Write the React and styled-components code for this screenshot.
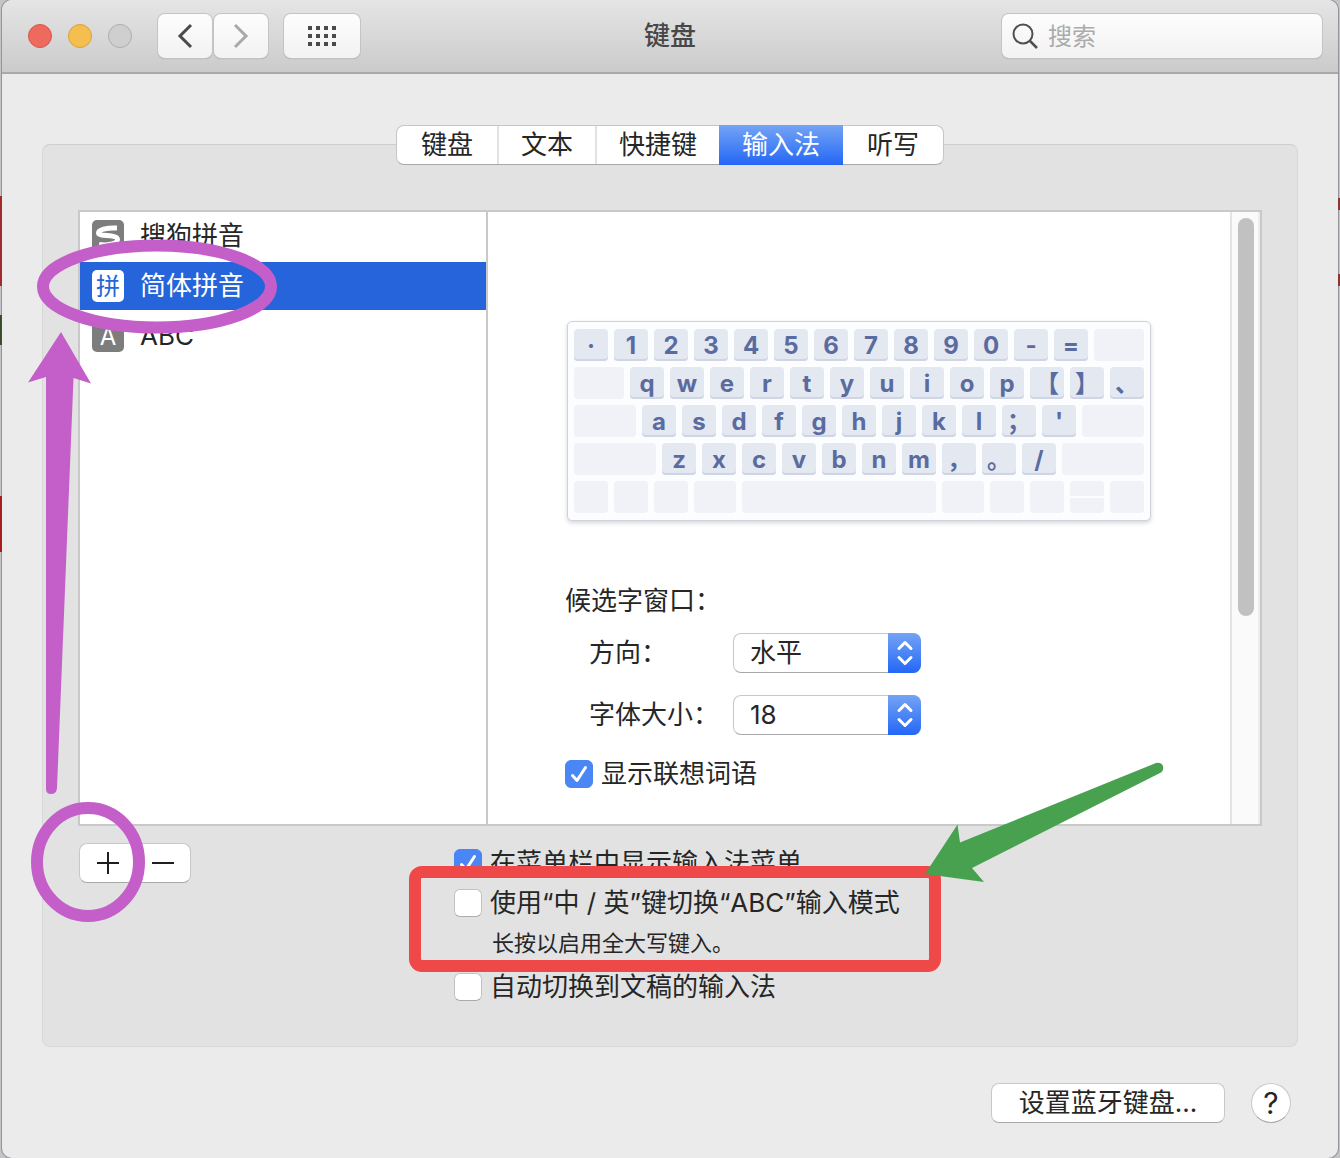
import React, { useState } from "react";
import styled, { createGlobalStyle } from "styled-components";

const GlobalStyle = createGlobalStyle`
  * {
    box-sizing: border-box;
  }
  body {
    margin: 0;
    font-family: Inter, "Noto Sans CJK SC", sans-serif;
    font-size: 26px;
    line-height: 36px;
    color: #262626;
    background-color: #c4c4c6;
    /* the desktop that shows at both sides of the window */
    background-image: linear-gradient(
        transparent 196px,
        #a32a2a 196px,
        #a32a2a 286px,
        transparent 286px,
        transparent 315px,
        #3c4a2c 315px,
        #3c4a2c 345px,
        transparent 345px,
        transparent 496px,
        #a31c1c 496px,
        #a31c1c 552px,
        transparent 552px
      ),
      linear-gradient(
        transparent 198px,
        #a32a2a 198px,
        #a32a2a 210px,
        transparent 210px,
        transparent 274px,
        #a32a2a 274px,
        #a32a2a 286px,
        transparent 286px
      );
    background-size: 2px 100%, 2px 100%;
    background-position: left top, right top;
    background-repeat: no-repeat;
  }
  button, input, select {
    font: inherit;
    color: inherit;
    margin: 0;
  }
`;
const Window = styled.main`
  min-height: 100vh;
  margin: 0 2px;
  display: flex;
  flex-direction: column;
  background-color: #ebebeb;
  border-radius: 10px;
  box-shadow: 0 0 0 1px rgba(80, 80, 84, 0.4);
  overflow: hidden;
`;
const TitleBar = styled.header`
  display: grid;
  grid-template-columns: 1fr auto 1fr;
  align-items: center;
  height: 74px;
  padding: 0 16px;
  background: linear-gradient(#e5e5e5, #cbcbcb);
  border-bottom: 2px solid #a9a9a9;
  h1 {
    margin: 0;
    font-size: 26px;
    font-weight: 500;
    color: #474747;
  }
`;
const Controls = styled.div`
  display: flex;
  align-items: center;
  padding-left: 10px;
`;
const TrafficLight = styled.button`
  width: 24px;
  height: 24px;
  padding: 0;
  margin-right: 16px;
  border-radius: 50%;
  border: 1px solid ${(props) => props.$edge};
  background-color: ${(props) => props.$fill};
`;
const ToolButton = styled.button`
  display: grid;
  place-items: center;
  width: ${(props) => (props.$wide ? "76px" : "54px")};
  height: 44px;
  padding: 0;
  margin-left: ${(props) => props.$gap || "0"};
  border: 0;
  border-radius: 7px;
  color: ${(props) => (props.disabled ? "#a9a9a9" : "#4a4a4a")};
  background: linear-gradient(#fdfdfd, #f2f2f2);
  box-shadow: 0 0 0 1px #c4c4c4, 0 1px 1px 0 #8c8c8c;
`;
const SearchField = styled.label`
  justify-self: end;
  display: flex;
  align-items: center;
  gap: 10px;
  width: 320px;
  height: 44px;
  padding: 0 10px;
  border-radius: 7px;
  background: linear-gradient(#fdfdfd, #f2f2f2);
  box-shadow: 0 0 0 1px #c4c4c4, 0 1px 1px 0 #8c8c8c;
  svg {
    flex: none;
  }
  input {
    flex: 1;
    min-width: 0;
    height: 40px;
    padding: 0;
    font-size: 24px;
    border: 0;
    outline: 0;
    background: transparent;
  }
  input::placeholder {
    color: #ababab;
    opacity: 1;
  }
`;
const Body = styled.div`
  flex: 1;
  display: flex;
  flex-direction: column;
  padding: 51px 40px 34px;
`;
const Tabs = styled.nav`
  position: relative;
  align-self: center;
  display: grid;
  grid-template-columns: 102px 98px 122px 124px 100px;
  height: 40px;
  margin-bottom: -21px;
  border-radius: 8px;
  background-color: #fff;
  border: 1px solid #c6c6c6;
  border-bottom-color: #a8a8a8;
`;
const Tab = styled.button`
  margin: ${(props) => (props.$active ? "-1px 0" : "0")};
  padding: 0;
  border: 0;
  border-right: ${(props) => (props.$divider ? "2px solid #e2e2e2" : "0")};
  color: ${(props) => (props.$active ? "#fff" : "#262626")};
  background: ${(props) =>
    props.$active ? "linear-gradient(#74a4f5, #2467f6)" : "transparent"};
`;
const Panel = styled.section`
  padding: 65px 35px 39px;
  background-color: #e2e2e2;
  border: 1px solid #d8d8d8;
  border-top-color: #cecece;
  border-radius: 8px;
`;
const Sources = styled.div`
  display: flex;
  height: 616px;
  background-color: #fff;
  border: 2px solid #c9c9c9;
`;
const SourceList = styled.ul`
  position: relative;
  flex: 0 0 408px;
  display: flex;
  flex-direction: column;
  gap: 2px;
  margin: 0;
  padding: 0;
  list-style: none;
  border-right: 2px solid #c9c9c9;
`;
const SourceItem = styled.button`
  display: flex;
  align-items: center;
  gap: 16px;
  width: 100%;
  height: 48px;
  padding: 0 12px;
  border: 0;
  text-align: left;
  color: ${(props) => (props.$active ? "#fff" : "#262626")};
  background-color: ${(props) => (props.$active ? "#2564da" : "transparent")};
`;
const SourceIcon = styled.span`
  display: grid;
  place-items: center;
  width: 32px;
  height: 32px;
  border-radius: 5px;
  font-size: 24px;
  line-height: 34px;
  color: ${(props) => (props.$active ? "#2564da" : "#fff")};
  background-color: ${(props) => (props.$active ? "#fff" : "#7d7d7d")};
`;
const Preview = styled.div`
  flex: 1;
  display: flex;
  justify-content: center;
  padding-top: 109px;
`;
const PreviewColumn = styled.div`
  width: 588px;
`;
const Keyboard = styled.div`
  display: flex;
  flex-direction: column;
  gap: 6px;
  margin: 0 2px 62px;
  padding: 7px 6px;
  border: 1px solid #cfd2dc;
  border-radius: 5px;
  background-color: #fcfdff;
  box-shadow: 0 2px 4px rgba(0, 0, 0, 0.16);
`;
const KeyRow = styled.div`
  display: flex;
  gap: 6px;
`;
const Key = styled.span`
  flex: 0 0 34px;
  height: 32px;
  border-radius: 4px;
  font-size: 24px;
  font-weight: 700;
  line-height: 34px;
  text-align: center;
  color: #5a6c9f;
  background-color: #e4e8f1;
  box-shadow: inset 0 -2px 0 #cfd5e4;
`;
const BlankKey = styled.span`
  flex: ${(props) => (props.$width ? `0 0 ${props.$width}px` : "1")};
  height: 32px;
  border-radius: 4px;
  background: ${(props) =>
    props.$split
      ? "linear-gradient(#f1f2f7 15px, #fcfdff 15px, #fcfdff 17px, #f1f2f7 17px)"
      : "#f1f2f7"};
`;
const FormHeading = styled.h2`
  margin: 0 0 14px;
  font-size: 26px;
  font-weight: 400;
`;
const FormRows = styled.div`
  display: flex;
  flex-direction: column;
  gap: 22px;
  margin-bottom: 19px;
`;
const FormRow = styled.label`
  display: grid;
  grid-template-columns: 144px 188px;
  align-items: center;
  padding-left: 24px;
`;
const SelectBox = styled.span`
  display: grid;
  align-items: center;
  height: 40px;
  > * {
    grid-area: 1 / 1;
  }
  select {
    width: 100%;
    height: 40px;
    padding: 0 40px 0 16px;
    appearance: none;
    border: 1px solid #c8c8c8;
    border-bottom-color: #a8a8a8;
    border-radius: 8px;
    background-color: #fff;
  }
`;
const SelectCap = styled.span`
  justify-self: end;
  display: grid;
  place-items: center;
  width: 33px;
  height: 40px;
  border-radius: 0 8px 8px 0;
  background: linear-gradient(#74a4f5, #2467f6);
  pointer-events: none;
`;
const CheckRow = styled.label`
  display: flex;
  align-items: center;
  gap: 8px;
  height: 40px;
  white-space: nowrap;
`;
const CheckBox = styled.span`
  display: grid;
  > * {
    grid-area: 1 / 1;
  }
  input {
    width: 28px;
    height: 28px;
    appearance: none;
    border: 1px solid #c2c2c2;
    border-bottom-color: #acacac;
    border-radius: 6px;
    background-color: #fff;
  }
  input:checked {
    border-color: #4a86f0;
    background-color: #4a86f5;
  }
  svg {
    pointer-events: none;
  }
`;
const Scrollbar = styled.div`
  flex: 0 0 30px;
  padding: 6px 4px 0 6px;
  background-color: #fafafa;
  border-left: 2px solid #e4e4e4;
  border-right: 2px solid #ededed;
`;
const ScrollThumb = styled.div`
  width: 16px;
  height: 398px;
  border-radius: 8px;
  background-color: #c1c1c1;
`;
const PanelFooter = styled.div`
  display: grid;
  grid-template-columns: 376px 1fr;
  align-items: start;
  padding-top: 17px;
`;
const AddRemove = styled.div`
  position: relative;
  justify-self: start;
  display: flex;
  margin-left: 1px;
  border: 1px solid #c8c8c8;
  border-bottom-color: #a8a8a8;
  border-radius: 8px;
  background-color: #fff;
  button {
    display: grid;
    place-items: center;
    width: 55px;
    height: 38px;
    padding: 0;
    border: 0;
    background: transparent;
  }
`;
const Marked = styled.div`
  position: relative;
  width: 442px;
  margin-bottom: 4px;
`;
const Hint = styled.p`
  margin: 0;
  padding-left: 38px;
  font-size: 22px;
  line-height: 40px;
`;
const Mark = styled.svg`
  position: absolute;
  left: ${(props) => props.$left}px;
  top: ${(props) => props.$top}px;
  z-index: 2;
  pointer-events: none;
`;
const BottomBar = styled.footer`
  display: flex;
  justify-content: flex-end;
  gap: 26px;
  padding: 36px 7px 0 0;
`;
const PushButton = styled.button`
  height: 40px;
  width: ${(props) => (props.$round ? "40px" : "234px")};
  padding: 0;
  border: 1px solid #c8c8c8;
  border-bottom-color: #a8a8a8;
  border-radius: ${(props) => (props.$round ? "50%" : "8px")};
  background-color: #fff;
  font-size: ${(props) => (props.$round ? "30px" : "26px")};
`;

const PURPLE = "#c45ec9";
const RED = "#ee4848";
const GREEN = "#48a14f";

const tabs = ["键盘", "文本", "快捷键", "输入法", "听写"];

const Check = ({ label, checked }) => {
  const [on, setOn] = useState(Boolean(checked));
  return (
    <CheckRow>
      <CheckBox>
        <input
          type="checkbox"
          checked={on}
          onChange={(e) => setOn(e.target.checked)}
        />
        {on && (
          <svg width="28" height="28" viewBox="0 0 28 28" fill="none">
            <path
              d="M7.5 15.5 12 20.5 20.5 7.5"
              stroke="#fff"
              strokeWidth="3"
              strokeLinecap="round"
              strokeLinejoin="round"
            />
          </svg>
        )}
      </CheckBox>
      <span>{label}</span>
    </CheckRow>
  );
};

const Select = ({ label, options }) => (
  <FormRow>
    <span>{label}</span>
    <SelectBox>
      <select>
        {options.map((option) => (
          <option key={option}>{option}</option>
        ))}
      </select>
      <SelectCap>
        <svg width="18" height="26" viewBox="0 0 18 26" fill="none">
          <path
            d="M3 8.5 9 2.5 15 8.5M3 17.500 9 23.500 15 17.500"
            stroke="#fff"
            strokeWidth="3"
            strokeLinecap="round"
            strokeLinejoin="round"
          />
        </svg>
      </SelectCap>
    </SelectBox>
  </FormRow>
);

const Keys = ({ chars }) => chars.map((char) => <Key key={char}>{char}</Key>);

const KeyboardPreview = () => (
  <Keyboard>
    <KeyRow>
      <Keys chars={[..."·1234567890-="]} />
      <BlankKey />
    </KeyRow>
    <KeyRow>
      <BlankKey />
      <Keys chars={[..."qwertyuiop【】、"]} />
    </KeyRow>
    <KeyRow>
      <BlankKey />
      <Keys chars={[..."asdfghjkl；'"]} />
      <BlankKey />
    </KeyRow>
    <KeyRow>
      <BlankKey />
      <Keys chars={[..."zxcvbnm，。/"]} />
      <BlankKey />
    </KeyRow>
    <KeyRow>
      <BlankKey $width={34} />
      <BlankKey $width={34} />
      <BlankKey $width={34} />
      <BlankKey $width={42} />
      <BlankKey />
      <BlankKey $width={42} />
      <BlankKey $width={34} />
      <BlankKey $width={34} />
      <BlankKey $width={34} $split />
      <BlankKey $width={34} />
    </KeyRow>
  </Keyboard>
);

const SogouLogo = () => (
  <svg width="32" height="32" viewBox="0 0 32 32" fill="none">
    <path
      d="M25 8C14 7.500 6.500 10 6.500 13C6.500 17 25.500 14 25.500 19.500C25.500 24 14 26 7 24.500"
      stroke="#fff"
      strokeWidth="5"
    />
  </svg>
);

const App = () => {
  const [tab, setTab] = useState("输入法");
  const [source, setSource] = useState("简体拼音");
  const sources = [
    { name: "搜狗拼音", icon: <SogouLogo /> },
    { name: "简体拼音", icon: "拼" },
    { name: "ABC", icon: "A" },
  ];
  return (
    <>
      <GlobalStyle />
      <Window>
        <TitleBar>
          <Controls>
            <TrafficLight aria-label="关闭" $fill="#ee6a5f" $edge="#d8564c" />
            <TrafficLight aria-label="最小化" $fill="#f5bf4f" $edge="#d8a13a" />
            <TrafficLight aria-label="缩放" $fill="#cfcfcf" $edge="#adadad" />
            <ToolButton aria-label="后退" $gap="10px">
              <svg width="16" height="26" viewBox="0 0 16 26" fill="none">
                <path d="M14 2 3 13 14 24" stroke="currentColor" strokeWidth="3" />
              </svg>
            </ToolButton>
            <ToolButton aria-label="前进" $gap="2px" disabled>
              <svg width="16" height="26" viewBox="0 0 16 26" fill="none">
                <path d="M2 2 13 13 2 24" stroke="currentColor" strokeWidth="3" />
              </svg>
            </ToolButton>
            <ToolButton aria-label="显示全部" $gap="16px" $wide>
              <svg width="28" height="20" viewBox="0 0 28 20" fill="currentColor">
                {[0, 8, 16].map((y) =>
                  [0, 8, 16, 24].map((x) => (
                    <rect key={`${x}-${y}`} x={x} y={y} width="4" height="4" />
                  ))
                )}
              </svg>
            </ToolButton>
          </Controls>
          <h1>键盘</h1>
          <SearchField>
            <svg width="26" height="26" viewBox="0 0 26 26" fill="none">
              <circle cx="11" cy="11" r="9.500" stroke="#4f4f4f" strokeWidth="2" />
              <path d="M17.500 17.500 25 25" stroke="#4f4f4f" strokeWidth="2.500" />
            </svg>
            <input type="text" placeholder="搜索" aria-label="搜索" />
          </SearchField>
        </TitleBar>
        <Body>
          <Tabs>
            {tabs.map((name, i) => (
              <Tab
                key={name}
                $active={name === tab}
                $divider={i < 2}
                onClick={() => setTab(name)}
              >
                {name}
              </Tab>
            ))}
          </Tabs>
          <Panel>
            <Sources>
              <SourceList>
                {sources.map(({ name, icon }) => (
                  <li key={name}>
                    <SourceItem
                      $active={name === source}
                      onClick={() => setSource(name)}
                    >
                      <SourceIcon $active={name === source}>{icon}</SourceIcon>
                      {name}
                    </SourceItem>
                  </li>
                ))}
                <Mark
                  $left={-52}
                  $top={27}
                  width="250"
                  height="556"
                  viewBox="0 0 250 556"
                >
                  <ellipse
                    cx="129"
                    cy="47.500"
                    rx="114"
                    ry="41"
                    fill="none"
                    stroke={PURPLE}
                    strokeWidth="12"
                  />
                  <path
                    d="M33 93 63 144.500 45.500 139 29 549Q28.500 555 23 555 18 555 18 550V138L0 143.500Z"
                    fill={PURPLE}
                  />
                </Mark>
              </SourceList>
              <Preview>
                <PreviewColumn>
                  <KeyboardPreview />
                  <FormHeading>候选字窗口：</FormHeading>
                  <FormRows>
                    <Select label="方向：" options={["水平", "垂直"]} />
                    <Select label="字体大小：" options={["18", "24", "36"]} />
                  </FormRows>
                  <Check label="显示联想词语" checked />
                </PreviewColumn>
              </Preview>
              <Scrollbar>
                <ScrollThumb />
              </Scrollbar>
            </Sources>
            <PanelFooter>
              <AddRemove>
                <button aria-label="添加">
                  <svg width="22" height="22" viewBox="0 0 22 22">
                    <path d="M0 11H22M11 0V22" stroke="#1e1e1e" strokeWidth="2" />
                  </svg>
                </button>
                <button aria-label="移除">
                  <svg width="22" height="22" viewBox="0 0 22 22">
                    <path d="M0 11H22" stroke="#1e1e1e" strokeWidth="2" />
                  </svg>
                </button>
                <Mark
                  $left={-49}
                  $top={-42}
                  width="114"
                  height="120"
                  viewBox="0 0 114 120"
                >
                  <ellipse
                    cx="57"
                    cy="60"
                    rx="51"
                    ry="54"
                    fill="none"
                    stroke={PURPLE}
                    strokeWidth="12"
                  />
                </Mark>
              </AddRemove>
              <div>
                <Check label="在菜单栏中显示输入法菜单" checked />
                <Marked>
                  <Check label="使用“中 / 英”键切换“ABC”输入模式" />
                  <Hint>长按以启用全大写键入。</Hint>
                  <Mark
                    $left={-45}
                    $top={-121}
                    width="756"
                    height="211"
                    viewBox="0 0 756 211"
                  >
                    <rect
                      x="6"
                      y="110"
                      width="520"
                      height="94"
                      rx="7"
                      fill="none"
                      stroke={RED}
                      strokeWidth="12"
                    />
                    <path
                      d="M516 112 548.500 62.500 551 80.500 747 1Q752 0 754 4 755 9 751 11L563 106 575 120Z"
                      fill={GREEN}
                    />
                  </Mark>
                </Marked>
                <Check label="自动切换到文稿的输入法" />
              </div>
            </PanelFooter>
          </Panel>
          <BottomBar>
            <PushButton>设置蓝牙键盘...</PushButton>
            <PushButton $round aria-label="帮助">
              ?
            </PushButton>
          </BottomBar>
        </Body>
      </Window>
    </>
  );
};

export default App;
